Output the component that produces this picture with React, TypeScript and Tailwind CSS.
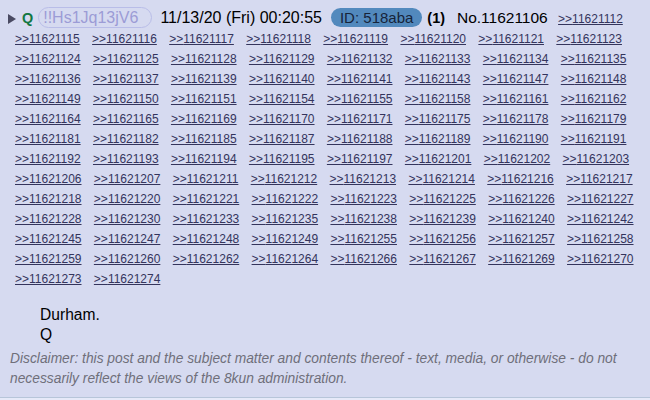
const replies = [
  "11621112",
  "11621115", "11621116", "11621117", "11621118", "11621119", "11621120", "11621121", "11621123",
  "11621124", "11621125", "11621128", "11621129", "11621132", "11621133", "11621134", "11621135",
  "11621136", "11621137", "11621139", "11621140", "11621141", "11621143", "11621147", "11621148",
  "11621149", "11621150", "11621151", "11621154", "11621155", "11621158", "11621161", "11621162",
  "11621164", "11621165", "11621169", "11621170", "11621171", "11621175", "11621178", "11621179",
  "11621181", "11621182", "11621185", "11621187", "11621188", "11621189", "11621190", "11621191",
  "11621192", "11621193", "11621194", "11621195", "11621197", "11621201", "11621202", "11621203",
  "11621206", "11621207", "11621211", "11621212", "11621213", "11621214", "11621216", "11621217",
  "11621218", "11621220", "11621221", "11621222", "11621223", "11621225", "11621226", "11621227",
  "11621228", "11621230", "11621233", "11621235", "11621238", "11621239", "11621240", "11621242",
  "11621245", "11621247", "11621248", "11621249", "11621255", "11621256", "11621257", "11621258",
  "11621259", "11621260", "11621262", "11621264", "11621266", "11621267", "11621269", "11621270",
  "11621273", "11621274",
];

export default function App() {
  return (
    <div className="w-[650px] h-[400px] bg-[#e6e9f8] font-['Liberation_Sans',Arial,sans-serif] overflow-hidden">
      <div className="bg-[#d6daf0] border-b border-[#b7c5d9] pl-2 pr-1 pt-2 pb-2 leading-[20px] h-[398px]">
        <div className="text-[12px] text-[#34345c]">
          <svg width="8" height="10" viewBox="0 0 8 10" className="inline-block align-[-1px]">
            <polygon points="0,0 8,5 0,10" fill="#4a4a62" />
          </svg>
          <span className="ml-[6px] text-[14.4px] font-bold text-[#117743]">Q</span>
          <span className="ml-[5px] text-[16px] text-[#9c9cd6] border border-[#b9bde8] rounded-full pl-[4px] pr-[13px] py-[1px]">
            !!Hs1Jq13jV6
          </span>
          <span className="ml-[8px] text-[16px] text-black">11/13/20 (Fri) 00:20:55</span>
          <span className="ml-[9px] text-[15px] text-[#17243a] bg-[#5289bd] rounded-full px-[9px] py-[1px]">
            ID: 518aba
          </span>
          <span className="ml-[5px] text-[14.4px] font-bold text-black">(1)</span>
          <span className="ml-[12px] text-[15.5px] text-black">No.11621106</span>
          {replies.map((r) => (
            <span key={r}>
              {" "}
              <a href="#" className="ml-[7px] mr-[2px] underline text-[#34345c]">
                &gt;&gt;{r}
              </a>
            </span>
          ))}
        </div>
        <div className="mt-4 ml-8 text-[15.6px] text-black">
          <p>Durham.</p>
          <p>Q</p>
        </div>
        <p className="mt-1 ml-[2px] text-[13.8px] italic text-[#6f6f7a]">
          Disclaimer: this post and the subject matter and contents thereof - text, media, or otherwise - do not necessarily reflect the views of the 8kun administration.
        </p>
      </div>
    </div>
  );
}
